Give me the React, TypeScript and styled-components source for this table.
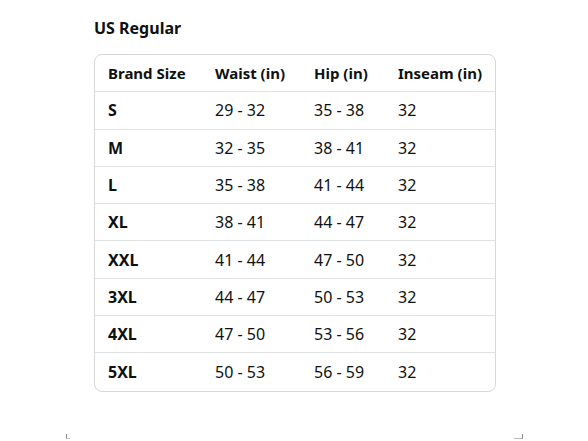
import styled, { createGlobalStyle } from "styled-components";

const GlobalStyle = createGlobalStyle`
  body {
    margin: 0;
    background: #fff;
    font-family: "Noto Sans", "Open Sans", Arial, sans-serif;
    color: #0f1111;
  }
`;

const Page = styled.div`
  width: 588px;
  height: 441px;
  position: relative;
  overflow: hidden;
  padding: 17px 0 0 94px;
  box-sizing: border-box;
`;

const Title = styled.h3`
  margin: 0 0 15px;
  font-size: 16px;
  font-weight: 700;
  line-height: 22px;
`;

const Table = styled.div`
  width: 402px;
  border: 1px solid #d5d9d9;
  border-radius: 8px;
  box-sizing: border-box;
`;

const Row = styled.div<{ $last?: boolean }>`
  display: grid;
  grid-template-columns: 107px 99px 84px 1fr;
  align-items: center;
  height: 37.3px;
  padding-left: 13px;
  box-sizing: border-box;
  border-bottom: ${(p) => (p.$last ? "none" : "1px solid #e0e3e3")};
`;

const Cell = styled.div<{ $bold?: boolean; $head?: boolean }>`
  font-size: ${(p) => (p.$head ? "15px" : "16px")};
  font-weight: ${(p) => (p.$bold ? 700 : 400)};
  white-space: nowrap;
`;

const Corner = styled.div<{ $side: "left" | "right" }>`
  position: absolute;
  top: 434px;
  ${(p) => (p.$side === "left" ? "left: 66px;" : "left: 514px;")}
  width: 8px;
  height: 4px;
  ${(p) =>
    p.$side === "left"
      ? "border-left: 1px solid #8a8a8a; border-bottom: 1px solid #c8c8c8; width: 3px;"
      : "border-bottom: 1px solid #bbb; border-right: 1px solid #888;"}
`;

const headers = ["Brand Size", "Waist (in)", "Hip (in)", "Inseam (in)"];

const rows = [
  ["S", "29 - 32", "35 - 38", "32"],
  ["M", "32 - 35", "38 - 41", "32"],
  ["L", "35 - 38", "41 - 44", "32"],
  ["XL", "38 - 41", "44 - 47", "32"],
  ["XXL", "41 - 44", "47 - 50", "32"],
  ["3XL", "44 - 47", "50 - 53", "32"],
  ["4XL", "47 - 50", "53 - 56", "32"],
  ["5XL", "50 - 53", "56 - 59", "32"],
];

const App = () => {
  return (
    <Page>
      <GlobalStyle />
      <Title>US Regular</Title>
      <Table>
        <Row>
          {headers.map((h) => (
            <Cell key={h} $bold $head>
              {h}
            </Cell>
          ))}
        </Row>
        {rows.map((r, i) => (
          <Row key={r[0]} $last={i === rows.length - 1}>
            {r.map((c, j) => (
              <Cell key={j} $bold={j === 0}>
                {c}
              </Cell>
            ))}
          </Row>
        ))}
      </Table>
      <Corner $side="left" />
      <Corner $side="right" />
    </Page>
  );
};

export default App;
